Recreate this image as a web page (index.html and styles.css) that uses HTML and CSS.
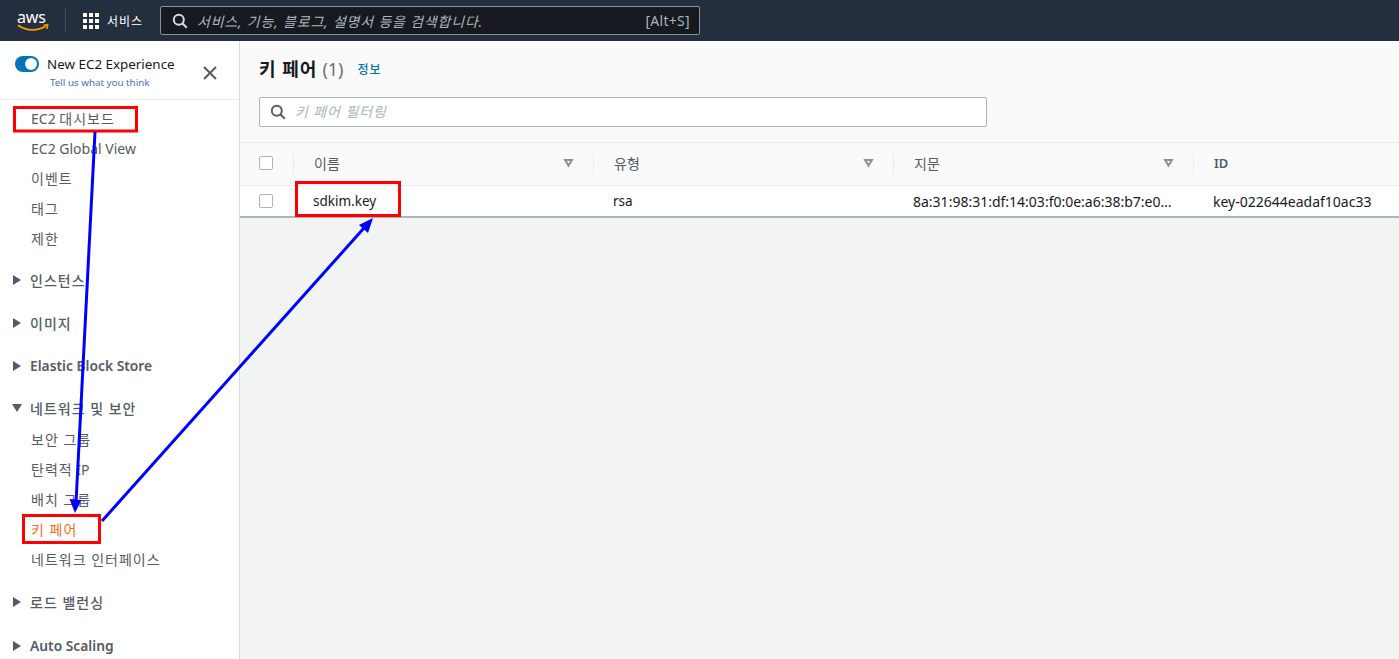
FILE: index.html
```html
<!DOCTYPE html>
<html lang="ko">
<head>
<meta charset="utf-8">
<title>키 페어</title>
<link rel="stylesheet" href="styles.css">
</head>
<body>
<header class="topbar">
  <svg class="logo" viewBox="0 0 32 20" width="32" height="20">
    <path class="logo-smile" d="M1 14.2c4.5 3.2 9.5 4.6 14.6 4.6 4.2 0 9-1.2 13-3.6" />
    <path class="logo-tip" d="M26.6 14.2l4-.6-.6 4.2" />
    <text class="logo-text" x="0" y="11.5">aws</text>
  </svg>
  <span class="topbar-sep"></span>
  <svg class="grid-icon" viewBox="0 0 16 16" width="16" height="16">
    <rect x="0" y="0" width="4" height="4"/><rect x="6" y="0" width="4" height="4"/><rect x="12" y="0" width="4" height="4"/>
    <rect x="0" y="6" width="4" height="4"/><rect x="6" y="6" width="4" height="4"/><rect x="12" y="6" width="4" height="4"/>
    <rect x="0" y="12" width="4" height="4"/><rect x="6" y="12" width="4" height="4"/><rect x="12" y="12" width="4" height="4"/>
  </svg>
  <span class="services">서비스</span>
  <div class="global-search">
    <svg class="search-icon light" viewBox="0 0 16 16" width="16" height="16"><circle cx="6.8" cy="6.8" r="5"/><path d="M10.5 10.5l4.3 4.3"/></svg>
    <span class="global-placeholder">서비스, 기능, 블로그, 설명서 등을 검색합니다.</span>
    <span class="shortcut">[Alt+S]</span>
  </div>
</header>
<div class="layout">
  <nav class="sidebar">
    <div class="experience">
      <span class="toggle"><span class="toggle-knob"></span></span>
      <div class="experience-text">
        <div class="experience-title">New EC2 Experience</div>
        <a class="experience-link">Tell us what you think</a>
      </div>
      <svg class="close" viewBox="0 0 16 16" width="16" height="16"><path d="M2 2l12 12M14 2L2 14"/></svg>
    </div>
    <ul class="nav-items first">
      <li>EC2 <span class="ko">대시보드</span></li>
      <li>EC2 Global View</li>
      <li class="ko">이벤트</li>
      <li class="ko">태그</li>
      <li class="ko">제한</li>
    </ul>
    <div class="nav-section"><span class="caret right"></span><span class="ko">인스턴스</span></div>
    <div class="nav-section"><span class="caret right"></span><span class="ko">이미지</span></div>
    <div class="nav-section"><span class="caret right"></span>Elastic Block Store</div>
    <div class="nav-section open"><span class="caret down"></span><span class="ko">네트워크 및 보안</span></div>
    <ul class="nav-items second">
      <li class="ko">보안 그룹</li>
      <li><span class="ko">탄력적</span> IP</li>
      <li class="ko">배치 그룹</li>
      <li class="ko active">키 페어</li>
      <li class="ko">네트워크 인터페이스</li>
    </ul>
    <div class="nav-section after-list"><span class="caret right"></span><span class="ko">로드 밸런싱</span></div>
    <div class="nav-section last"><span class="caret right"></span>Auto Scaling</div>
  </nav>
  <main class="content">
    <section class="panel-head">
      <div class="title-row">
        <h1>키 페어</h1><span class="count">(1)</span><a class="info">정보</a>
      </div>
      <div class="filter">
        <svg class="search-icon" viewBox="0 0 16 16" width="16" height="16"><circle cx="6.8" cy="6.8" r="5"/><path d="M10.5 10.5l4.3 4.3"/></svg>
        <span class="filter-placeholder">키 페어 필터링</span>
      </div>
    </section>
    <div class="table">
      <div class="row head">
        <div class="cell check"><span class="checkbox"></span></div>
        <div class="cell th">이름<span class="sort"></span></div>
        <div class="cell th">유형<span class="sort"></span></div>
        <div class="cell th">지문<span class="sort"></span></div>
        <div class="cell th id">ID</div>
      </div>
      <div class="row body">
        <div class="cell check"><span class="checkbox"></span></div>
        <div class="cell td">sdkim.key</div>
        <div class="cell td">rsa</div>
        <div class="cell td wide">8a:31:98:31:df:14:03:f0:0e:a6:38:b7:e0…</div>
        <div class="cell td wide">key-022644eadaf10ac33</div>
      </div>
    </div>
  </main>
</div>
<svg class="annotations" viewBox="0 0 1399 659" width="1399" height="659">
  <rect class="box" x="14.5" y="107.5" width="122" height="23.5"/>
  <rect class="box" x="23.5" y="515.5" width="76" height="27"/>
  <rect class="box" x="296.5" y="182.5" width="103" height="33"/>
  <path class="arrow" d="M95 132L76 503"/>
  <path class="arrow-head" d="M69.5 499L81.5 500L75 513Z"/>
  <path class="arrow" d="M102 521L364 228"/>
  <path class="arrow-head" d="M359 225L368 233L373 218Z"/>
</svg>
</body>
</html>
```
FILE: styles.css
```css
* { box-sizing: border-box; }
html, body { margin: 0; height: 659px; overflow: hidden; }
body {
  font-family: "Noto Sans", "Noto Sans CJK KR", sans-serif;
  font-size: 14px;
  color: #16191f;
  background: #f2f3f3;
}
ul { list-style: none; margin: 0; padding: 0; }
.ko { letter-spacing: 1px; }

.topbar {
  height: 41px;
  background: #232f3e;
  display: flex;
  align-items: center;
  padding: 0 0 0 17px;
  color: #fff;
}
.logo { flex: none; margin-top: 1px; overflow: visible; }
.logo-text { font-size: 16px; fill: #fff; letter-spacing: -0.2px; }
.logo-smile { fill: none; stroke: #ff9900; stroke-width: 1.8; }
.logo-tip { fill: none; stroke: #ff9900; stroke-width: 1.6; }
.topbar-sep { width: 1px; height: 24px; background: #414d5c; margin: 0 17px 0 16px; }
.grid-icon { fill: #fff; flex: none; }
.services { font-size: 12px; margin-left: 8px; width: 36px; white-space: nowrap; letter-spacing: 1px; }
.global-search {
  margin-left: 17px;
  width: 540px;
  height: 29px;
  background: #16191f;
  border: 1px solid #879596;
  border-radius: 2px;
  display: flex;
  align-items: center;
  padding: 0 9px 0 11px;
}
.search-icon { fill: none; stroke: #545b64; stroke-width: 2; flex: none; }
.search-icon.light { stroke: #d5dbdb; }
.global-placeholder { margin-left: 9px; font-style: italic; font-size: 14px; letter-spacing: 0.8px; color: #aab7b8; flex: 1; white-space: nowrap; }
.shortcut { font-size: 14px; letter-spacing: 0.3px; color: #aab7b8; }

.layout { display: flex; height: 618px; }
.sidebar {
  width: 240px;
  flex: none;
  background: #fff;
  border-right: 1px solid #d5dbdb;
  overflow: hidden;
}
.experience {
  height: 59px;
  border-bottom: 1px solid #eaeded;
  display: flex;
  align-items: flex-start;
  padding: 14px 0 0 15px;
}
.toggle {
  width: 24px;
  height: 16px;
  border-radius: 8px;
  background: #0073bb;
  position: relative;
  flex: none;
  margin-top: 1px;
}
.toggle-knob {
  position: absolute;
  right: 2px;
  top: 2px;
  width: 12px;
  height: 12px;
  border-radius: 50%;
  background: #fff;
}
.experience-text { width: 148px; margin-left: 8px; }
.experience-title { font-size: 13.4px; line-height: 18px; white-space: nowrap; }
.experience-link { display: block; font-size: 9.8px; line-height: 14px; margin: 3px 0 0 3px; color: #3f6fc4; white-space: nowrap; }
.close { fill: none; stroke: #545b64; stroke-width: 2; margin: 10px 0 0 7px; flex: none; }

.nav-items { color: #545b64; font-size: 14px; }
.nav-items.first { padding-top: 4px; }
.nav-items.second { padding-top: 2px; }
.nav-items li { height: 30px; line-height: 30px; padding-left: 31px; white-space: nowrap; }
.nav-items li.active { color: #ec7211; }
.nav-section {
  height: 43px;
  display: flex;
  align-items: center;
  padding-left: 13px;
  font-size: 13.8px;
  font-weight: 600;
  color: #545b64;
  white-space: nowrap;
}
.nav-section .ko { font-size: 14px; font-weight: 500; }
.nav-items.first + .nav-section { margin-top: 4px; }
.nav-section.open { height: 31px; margin-top: 5px; }
.nav-section.after-list { margin-top: 5px; }
.nav-section.last { margin-top: 1px; }
.caret { width: 0; height: 0; margin-right: 9px; flex: none; }
.caret.right { border-left: 8px solid #545b64; border-top: 5px solid transparent; border-bottom: 5px solid transparent; }
.caret.down { border-top: 8px solid #545b64; border-left: 5px solid transparent; border-right: 5px solid transparent; margin-left: -1px; margin-right: 8px; }

.content { flex: 1; min-width: 0; overflow: hidden; }
.panel-head {
  height: 102px;
  background: #fafafa;
  border-bottom: 1px solid #eaeded;
  padding: 14px 0 0 19px;
}
.title-row { display: flex; align-items: center; height: 28px; }
h1 { margin: 0; font-size: 18px; font-weight: 700; line-height: 28px; color: #16191f; letter-spacing: 1px; }
.count { font-size: 18px; color: #687078; margin-left: 5px; }
.info { font-size: 12px; font-weight: 500; color: #0073bb; margin-left: 14px; letter-spacing: 1px; }
.filter {
  margin-top: 14px;
  width: 728px;
  height: 30px;
  background: #fff;
  border: 1px solid #aab7b8;
  border-radius: 2px;
  display: flex;
  align-items: center;
  padding-left: 10px;
}
.filter-placeholder { margin-left: 9px; font-style: italic; font-size: 14px; letter-spacing: 0.9px; color: #aab7b8; padding-bottom: 2px; }

.table { width: 1240px; border-bottom: 2px solid #aab7b8; background: #fff; }
.row { display: grid; grid-template-columns: 53px 300px 300px 300px 1fr; align-items: stretch; }
.row.head { height: 43px; background: #fafafa; border-bottom: 1px solid #eaeded; }
.row.body { height: 30px; }
.cell { display: flex; align-items: center; position: relative; min-width: 0; }
.check { padding-left: 19px; }
.head .check { padding-bottom: 2px; }
.checkbox { width: 14px; height: 14px; border: 1px solid #aab7b8; border-radius: 2px; background: #fff; }
.th { padding: 0 19px 2px 21px; color: #545b64; font-size: 14px; justify-content: space-between; }
.th.id { font-size: 13px; font-weight: 600; justify-content: flex-start; }
.th::before {
  content: "";
  position: absolute;
  left: 0;
  top: 10px;
  height: 22px;
  width: 1px;
  background: #eaeded;
}
.sort {
  width: 11px;
  height: 9px;
  background: #879596;
  clip-path: polygon(0 0, 100% 0, 50% 100%);
  position: relative;
}
.sort::after {
  content: "";
  position: absolute;
  left: 3.5px;
  top: 2px;
  width: 4px;
  height: 3px;
  background: #fafafa;
  clip-path: polygon(0 0, 100% 0, 50% 100%);
}
.td { padding: 0 20px; font-size: 13.5px; color: #16191f; white-space: nowrap; }
.td.wide { font-size: 14px; padding-right: 0; }

.annotations { position: absolute; left: 0; top: 0; pointer-events: none; }
.box { fill: none; stroke: #ff0000; stroke-width: 3; }
.arrow { fill: none; stroke: #0000ff; stroke-width: 3; }
.arrow-head { fill: #0000ff; }
```
